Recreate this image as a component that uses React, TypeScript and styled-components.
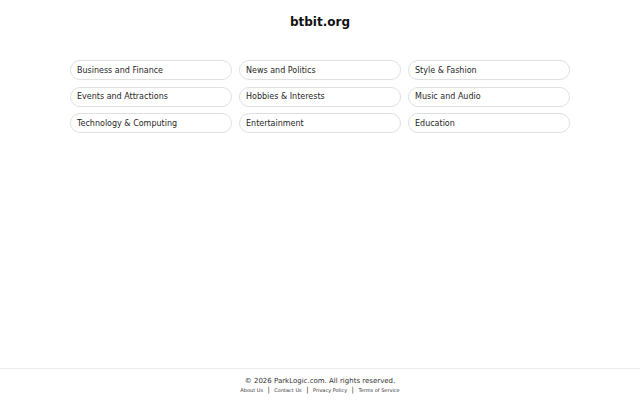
import styled, { createGlobalStyle } from 'styled-components';

const GlobalStyle = createGlobalStyle`
  html, body {
    margin: 0;
    padding: 0;
    background: #ffffff;
    font-family: 'DejaVu Sans', 'Noto Sans', sans-serif;
    color: #1f1f1f;
  }
`;

const Page = styled.div`
  min-height: 100vh;
  display: flex;
  flex-direction: column;
`;

const Main = styled.main`
  flex: 1;
  display: flex;
  flex-direction: column;
  align-items: center;
`;

const Title = styled.h1`
  margin: 14px 0 0;
  font-size: 12px;
  line-height: 16px;
  font-weight: 700;
  color: #111;
`;

const CategoryGrid = styled.div`
  margin-top: 30px;
  width: 500px;
  display: grid;
  grid-template-columns: repeat(3, 1fr);
  column-gap: 7px;
  row-gap: 6.5px;
`;

const CategoryPill = styled.a`
  display: flex;
  align-items: center;
  height: 20px;
  box-sizing: border-box;
  padding: 0 6px;
  border: 1px solid #e0e0e0;
  border-radius: 999px;
  font-size: 8px;
  color: #1f1f1f;
  text-decoration: none;
`;

const Footer = styled.footer`
  border-top: 1px solid #ececec;
  padding: 7px 0 6px;
  display: flex;
  flex-direction: column;
  align-items: center;
`;

const Copyright = styled.div`
  font-size: 7px;
  line-height: 10px;
  color: #333;
`;

const LinkRow = styled.nav`
  display: flex;
  align-items: center;
  height: 8px;
  font-size: 5px;
`;

const FooterLink = styled.a`
  color: #333;
  text-decoration: none;
`;

const Divider = styled.span`
  font-size: 7px;
  color: #333;
  margin: 0 4.5px;
`;

const categories = [
  'Business and Finance',
  'News and Politics',
  'Style & Fashion',
  'Events and Attractions',
  'Hobbies & Interests',
  'Music and Audio',
  'Technology & Computing',
  'Entertainment',
  'Education',
];

const links = ['About Us', 'Contact Us', 'Privacy Policy', 'Terms of Service'];

export default function App() {
  return (
    <Page>
      <GlobalStyle />
      <Main>
        <Title>btbit.org</Title>
        <CategoryGrid>
          {categories.map((c) => (
            <CategoryPill key={c} href="#">
              {c}
            </CategoryPill>
          ))}
        </CategoryGrid>
      </Main>
      <Footer>
        <Copyright>© 2026 ParkLogic.com. All rights reserved.</Copyright>
        <LinkRow>
          {links.map((l, i) => (
            <span key={l} style={{ display: 'contents' }}>
              {i > 0 && <Divider>|</Divider>}
              <FooterLink href="#">{l}</FooterLink>
            </span>
          ))}
        </LinkRow>
      </Footer>
    </Page>
  );
}
